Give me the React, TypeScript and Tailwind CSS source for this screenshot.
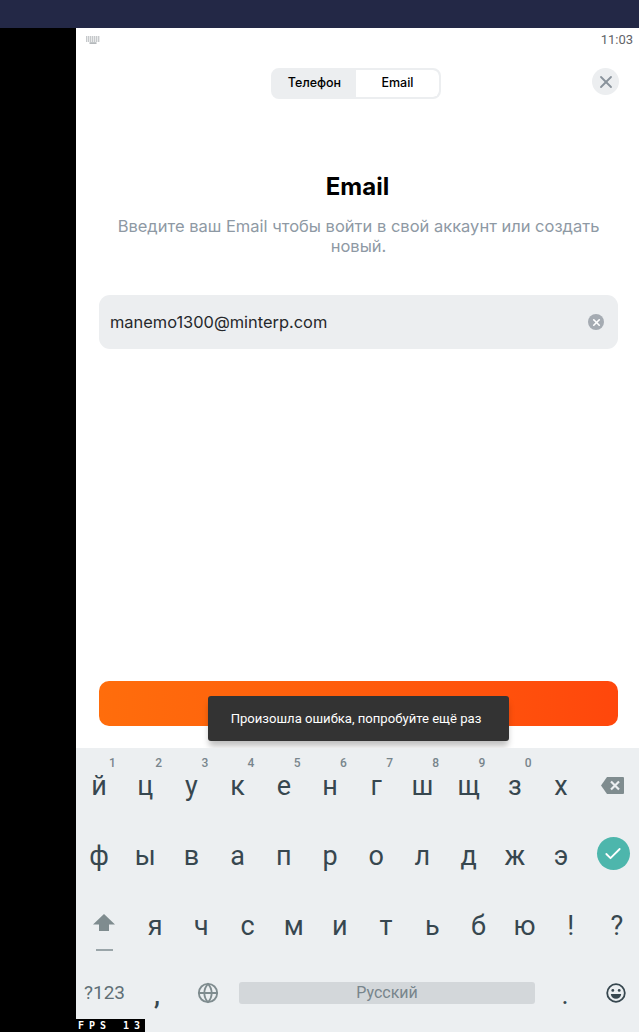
import { Check, Globe, X } from "lucide-react";

const rowOne = ["й", "ц", "у", "к", "е", "н", "г", "ш", "щ", "з", "х"];
const hints = ["1", "2", "3", "4", "5", "6", "7", "8", "9", "0"];
const rowTwo = ["ф", "ы", "в", "а", "п", "р", "о", "л", "д", "ж", "э"];
const rowThree = ["я", "ч", "с", "м", "и", "т", "ь", "б", "ю", "!", "?"];

function Key({ label, hint }: { label: string; hint?: string }) {
  return (
    <div className="relative flex h-full w-[46.2px] shrink-0 items-center justify-center text-[27px] text-[#37474f]">
      {hint && (
        <span className="absolute left-[33px] top-[6px] text-[12px] font-medium leading-[18px] text-[#78858c]">
          {hint}
        </span>
      )}
      <span className="mt-[5px]">{label}</span>
    </div>
  );
}

function Keyboard() {
  return (
    <div className="relative z-10 mt-auto h-[284px] bg-[#eceff1] font-['Roboto',sans-serif]">
      <div className="flex h-[71px]">
        {rowOne.map((k, i) => (
          <Key key={k} label={k} hint={hints[i]} />
        ))}
        <div className="flex h-full flex-1 items-center justify-center pl-[2px] pt-[3px]">
          <svg width="23" height="17" viewBox="0 0 23 17">
            <path d="M6 0 H22 a1 1 0 0 1 1 1 V16 a1 1 0 0 1 -1 1 H6 L0 8.5 Z" fill="#7f8c8f" />
            <path d="M10 4.5 L18 12.5 M18 4.5 L10 12.5" stroke="#eceff1" strokeWidth="2.2" fill="none" />
          </svg>
        </div>
      </div>
      <div className="flex h-[69px]">
        {rowTwo.map((k) => (
          <Key key={k} label={k} />
        ))}
        <div className="flex h-full flex-1 items-center justify-center pl-[3px]">
          <div className="flex size-[33px] items-center justify-center rounded-full bg-[#4db6ac]">
            <Check className="size-[20px] text-white" strokeWidth={2.2} />
          </div>
        </div>
      </div>
      <div className="flex h-[71px]">
        <div className="relative flex h-full w-[56px] shrink-0 items-center justify-center">
          <svg width="22" height="17" viewBox="0 0 22 17" className="mt-[-3px]">
            <path d="M11 0 L22 10.5 H16 V17 H6 V10.5 H0 Z" fill="#7f8c8f" />
          </svg>
          <div className="absolute bottom-[8px] left-[20px] h-[2px] w-[17px] bg-[#9aa5a9]" />
        </div>
        {rowThree.map((k) => (
          <Key key={k} label={k} />
        ))}
      </div>
      <div className="flex h-[73px] items-start pt-[9px]">
        <div className="flex h-[50px] w-[56px] items-center justify-center pl-[1px] text-[19px] text-[#5f6f76]">
          ?123
        </div>
        <div className="flex h-[45px] w-[50px] items-end justify-center text-[27px] font-medium leading-[36px] text-[#37474f]">
          ,
        </div>
        <div className="flex h-[50px] w-[52px] items-center justify-center">
          <Globe className="size-[22px] text-[#7f8c8f]" strokeWidth={2} />
        </div>
        <div className="mx-[5px] mt-[14px] flex h-[22px] w-[296px] items-center justify-center rounded-[3px] bg-[#d3d7da] text-[16px] text-[#78858c]">
          Русский
        </div>
        <div className="flex h-[45px] w-[50px] items-end justify-center text-[27px] leading-[36px] text-[#37474f]">
          .
        </div>
        <div className="flex h-[50px] flex-1 items-center justify-center pl-[2px]">
          <svg width="20" height="20" viewBox="0 0 20 20">
            <circle cx="10" cy="10" r="8.8" fill="none" stroke="#37474f" strokeWidth="1.8" />
            <circle cx="6.8" cy="7.4" r="1.4" fill="#37474f" />
            <circle cx="13.2" cy="7.4" r="1.4" fill="#37474f" />
            <path d="M4.8 11 H15.2 C15 14 12.8 15.8 10 15.8 C7.2 15.8 5 14 4.8 11 Z" fill="#37474f" />
          </svg>
        </div>
      </div>
    </div>
  );
}

export default function App() {
  return (
    <div className="relative flex h-[1032px] w-[639px] flex-col overflow-hidden bg-black font-['Inter',sans-serif]">
      <div className="h-[28px] shrink-0 bg-[#232846]" />
      <div className="ml-[76px] flex min-h-0 flex-1 flex-col bg-white">
        <div className="flex h-[24px] shrink-0 items-center justify-between pl-[10px] pr-[6px] font-['Roboto',sans-serif] text-[13px] text-[#5f6368]">
          <svg width="14" height="8" viewBox="0 0 14 8">
            <path
              d="M0 1 H14 M0 3 H14 M0 5 H14"
              stroke="#b4b8bb"
              strokeWidth="1.4"
              strokeDasharray="1.4 0.6"
            />
            <rect x="3.5" y="6.2" width="7" height="1.8" fill="#b4b8bb" />
          </svg>
          <span>11:03</span>
        </div>

        <div className="relative mt-[16px] flex shrink-0 justify-center pr-[3px]">
          <div className="flex h-[31px] w-[170px] overflow-hidden rounded-[8px] border-2 border-[#eceef0] bg-[#eceef0] text-[12.5px] font-medium text-black">
            <div className="flex w-[83px] items-center justify-center">Телефон</div>
            <div className="flex flex-1 items-center justify-center rounded-r-[6px] bg-white">Email</div>
          </div>
          <div className="absolute right-[20px] top-0 flex size-[27px] items-center justify-center rounded-full bg-[#eceef0]">
            <X className="size-[20px] text-[#8a939c]" strokeWidth={2.2} />
          </div>
        </div>

        <h1 className="mt-[73px] text-center text-[24px] font-bold leading-[30px] text-black">Email</h1>
        <p className="mx-auto mt-[14px] w-[510px] pl-[2px] text-center text-[16.5px] leading-[20px] text-[#8e99a4]">
          Введите ваш Email чтобы войти в свой аккаунт или создать новый.
        </p>

        <div className="ml-[23px] mr-[21px] mt-[39px] flex h-[54px] items-center justify-between rounded-[11px] bg-[#eceef0] pl-[11px] pr-[14px] text-[16.4px] text-[#26282b]">
          <span>manemo1300@minterp.com</span>
          <div className="flex size-[16px] items-center justify-center rounded-full bg-[#a5abb2]">
            <X className="size-[11px] text-white" strokeWidth={3.5} />
          </div>
        </div>

        <div className="ml-[23px] mr-[21px] mt-[332px] h-[45px] shrink-0 rounded-[10px] bg-gradient-to-r from-[#ff6d0c] to-[#ff470c]" />
        <Keyboard />
      </div>

      <div className="absolute left-[208px] top-[696px] flex h-[45px] w-[301px] items-center justify-center rounded-[3px] bg-[#333333] pr-[5px] font-['Roboto',sans-serif] text-[13.1px] text-white shadow-[0_6px_6px_-1px_rgba(0,0,0,0.25)]">
        Произошла ошибка, попробуйте ещё раз
      </div>

      <div className="absolute bottom-0 left-[76px] z-20 flex h-[13px] w-[69px] items-center justify-between bg-black pl-[2px] font-['DejaVu_Sans_Mono',monospace] text-[10px] font-bold leading-none tracking-[5px] text-white">
        <span>FPS</span>
        <span>13</span>
      </div>
    </div>
  );
}
